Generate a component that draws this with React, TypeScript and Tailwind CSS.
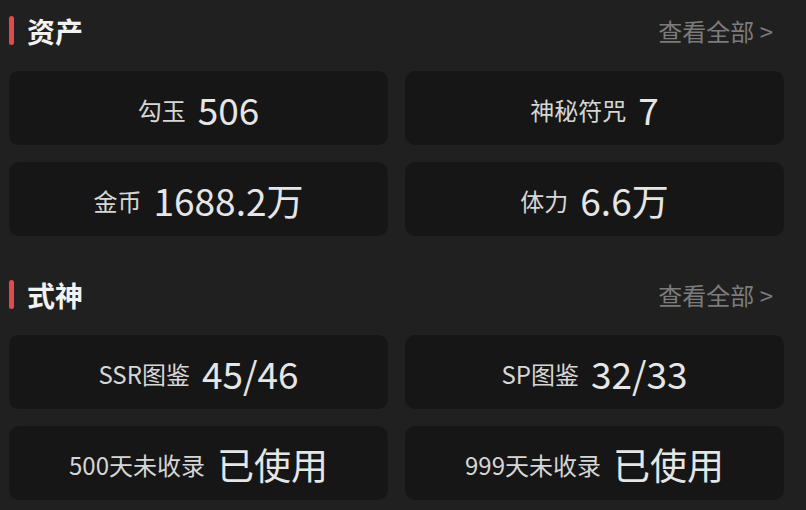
import React from 'react';

type Stat = { label: string; value: string };

const sections: { title: string; items: Stat[] }[] = [
  {
    title: '资产',
    items: [
      { label: '勾玉', value: '506' },
      { label: '神秘符咒', value: '7' },
      { label: '金币', value: '1688.2万' },
      { label: '体力', value: '6.6万' },
    ],
  },
  {
    title: '式神',
    items: [
      { label: 'SSR图鉴', value: '45/46' },
      { label: 'SP图鉴', value: '32/33' },
      { label: '500天未收录', value: '已使用' },
      { label: '999天未收录', value: '已使用' },
    ],
  },
];

function StatCard({ label, value }: Stat) {
  return (
    <div className="h-[74px] rounded-[10px] bg-[#161616] flex items-center justify-center">
      <div className="flex items-center gap-[12px] mt-[3px]">
        <span className="text-[24px] text-[#d6d6d6] leading-none">{label}</span>
        <span className="text-[37px] text-[#e6e6e6] leading-none">{value}</span>
      </div>
    </div>
  );
}

export default function App() {
  return (
    <div
      className="w-[806px] h-[510px] overflow-hidden bg-[#202020] pt-[16px] pl-[9px] pr-[22px]"
      style={{ fontFamily: '"Noto Sans CJK SC", "Noto Sans", sans-serif' }}
    >
      {sections.map((section, i) => (
        <div key={section.title} className={i > 0 ? 'mt-[44px]' : ''}>
          <div className="flex items-center justify-between h-[29px]">
            <div className="flex items-center gap-[13px]">
              <span className="w-[5px] h-[29px] rounded-full bg-[#e14a4a]"></span>
              <h2 className="text-[28px] font-bold text-[#f2f2f2] leading-none">{section.title}</h2>
            </div>
            <span className="text-[24px] text-[#7c7c7c] leading-none mr-[11px]">查看全部 &gt;</span>
          </div>
          <div className="grid grid-cols-2 gap-[17px] mt-[26px]">
            {section.items.map((item) => (
              <StatCard key={item.label} label={item.label} value={item.value} />
            ))}
          </div>
        </div>
      ))}
    </div>
  );
}
